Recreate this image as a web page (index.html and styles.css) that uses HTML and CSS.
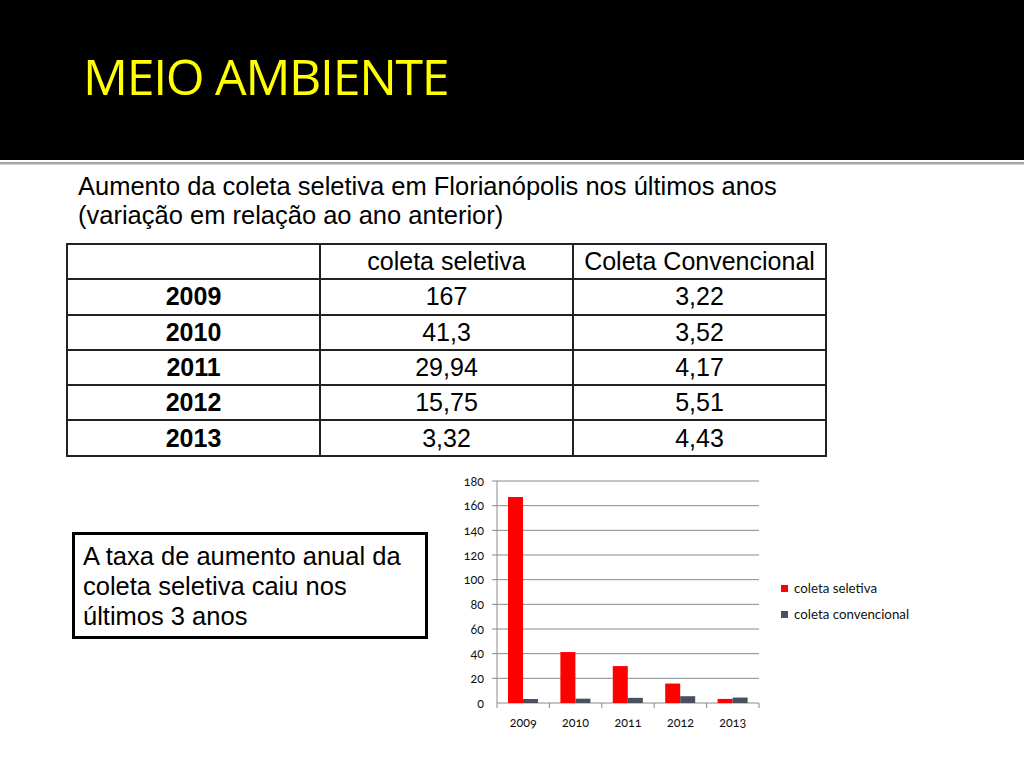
FILE: index.html
```html
<!DOCTYPE html>
<html lang="pt">
<head>
<meta charset="utf-8">
<title>Meio Ambiente</title>
<link rel="stylesheet" href="styles.css">
</head>
<body>
<header class="slide-header">
  <h1 class="title">MEIO AMBIENTE</h1>
</header>
<div class="rule"></div>
<main class="content">
  <p class="subtitle">Aumento da coleta seletiva em Florianópolis nos últimos anos<br>(variação em relação ao ano anterior)</p>
  <table class="data">
    <tr><th></th><th>coleta seletiva</th><th>Coleta Convencional</th></tr>
    <tr><td class="year">2009</td><td>167</td><td>3,22</td></tr>
    <tr><td class="year">2010</td><td>41,3</td><td>3,52</td></tr>
    <tr><td class="year">2011</td><td>29,94</td><td>4,17</td></tr>
    <tr><td class="year">2012</td><td>15,75</td><td>5,51</td></tr>
    <tr><td class="year">2013</td><td>3,32</td><td>4,43</td></tr>
  </table>
  <div class="lower">
    <div class="note">A taxa de aumento anual da coleta seletiva caiu nos últimos 3 anos</div>
    <svg class="chart" width="500" height="270" viewBox="0 0 500 270">
      <g class="grid">
        <line x1="57" y1="11" x2="319" y2="11"/>
        <line x1="57" y1="35.67" x2="319" y2="35.67"/>
        <line x1="57" y1="60.33" x2="319" y2="60.33"/>
        <line x1="57" y1="85" x2="319" y2="85"/>
        <line x1="57" y1="109.67" x2="319" y2="109.67"/>
        <line x1="57" y1="134.33" x2="319" y2="134.33"/>
        <line x1="57" y1="159" x2="319" y2="159"/>
        <line x1="57" y1="183.67" x2="319" y2="183.67"/>
        <line x1="57" y1="208.33" x2="319" y2="208.33"/>
        <line x1="57" y1="233" x2="319" y2="233"/>
        <line x1="57" y1="11" x2="57" y2="238"/>
        <line x1="52" y1="11" x2="57" y2="11"/>
        <line x1="52" y1="35.67" x2="57" y2="35.67"/>
        <line x1="52" y1="60.33" x2="57" y2="60.33"/>
        <line x1="52" y1="85" x2="57" y2="85"/>
        <line x1="52" y1="109.67" x2="57" y2="109.67"/>
        <line x1="52" y1="134.33" x2="57" y2="134.33"/>
        <line x1="52" y1="159" x2="57" y2="159"/>
        <line x1="52" y1="183.67" x2="57" y2="183.67"/>
        <line x1="52" y1="208.33" x2="57" y2="208.33"/>
        <line x1="109.4" y1="233" x2="109.4" y2="238"/>
        <line x1="161.8" y1="233" x2="161.8" y2="238"/>
        <line x1="214.2" y1="233" x2="214.2" y2="238"/>
        <line x1="266.6" y1="233" x2="266.6" y2="238"/>
        <line x1="319" y1="233" x2="319" y2="238"/>
      </g>
      <g class="ylabels">
        <text x="44" y="15.5">180</text>
        <text x="44" y="40.17">160</text>
        <text x="44" y="64.83">140</text>
        <text x="44" y="89.5">120</text>
        <text x="44" y="114.17">100</text>
        <text x="44" y="138.83">80</text>
        <text x="44" y="163.5">60</text>
        <text x="44" y="188.17">40</text>
        <text x="44" y="212.83">20</text>
        <text x="44" y="237.5">0</text>
      </g>
      <g class="red">
        <rect x="68" y="27.03" width="15" height="205.97"/>
        <rect x="120.4" y="182.06" width="15" height="50.94"/>
        <rect x="172.8" y="196.07" width="15" height="36.93"/>
        <rect x="225.2" y="213.57" width="15" height="19.43"/>
        <rect x="277.6" y="228.91" width="15" height="4.09"/>
      </g>
      <g class="dark">
        <rect x="83" y="229.03" width="15" height="3.97"/>
        <rect x="135.4" y="228.66" width="15" height="4.34"/>
        <rect x="187.8" y="227.86" width="15" height="5.14"/>
        <rect x="240.2" y="226.2" width="15" height="6.8"/>
        <rect x="292.6" y="227.54" width="15" height="5.46"/>
      </g>
      <g class="xlabels">
        <text x="83.2" y="256.5">2009</text>
        <text x="135.6" y="256.5">2010</text>
        <text x="188" y="256.5">2011</text>
        <text x="240.4" y="256.5">2012</text>
        <text x="292.8" y="256.5">2013</text>
      </g>
      <g class="legend">
        <rect class="red-fill" x="341" y="115" width="7" height="7"/>
        <text x="354" y="122.5">coleta seletiva</text>
        <rect class="dark-fill" x="341" y="141" width="7" height="7"/>
        <text x="354" y="148.5">coleta convencional</text>
      </g>
    </svg>
  </div>
</main>
</body>
</html>
```

FILE: styles.css
```css
html, body {
  margin: 0;
  padding: 0;
  background: #ffffff;
}
body {
  width: 1024px;
  height: 768px;
  overflow: hidden;
  font-family: "Liberation Sans", Arial, sans-serif;
  color: #000;
}
.slide-header {
  height: 160px;
  background: #000;
  box-sizing: border-box;
  padding: 51px 0 0 83px;
}
.title {
  margin: 0;
  font-family: "Open Sans", "Lato", sans-serif;
  font-weight: 400;
  font-size: 50px;
  line-height: 50px;
  color: #ffff00;
  letter-spacing: -1.3px;
}
.rule {
  height: 3px;
  margin-top: 2px;
  background: linear-gradient(#8f8f8f, #d8d8d8);
}
.content {
  padding: 7px 0 0 66px;
}
.subtitle {
  margin: 0 0 13px 12px;
  font-size: 25.5px;
  line-height: 29px;
}
.data {
  border-collapse: collapse;
  width: 761px;
  table-layout: fixed;
  font-size: 25px;
}
.data th, .data td {
  border: 2px solid #222;
  height: 33.3px;
  padding: 0;
  text-align: center;
  font-weight: 400;
  line-height: 31px;
}
.data td.year {
  font-weight: 700;
}
.lower {
  display: flex;
  align-items: flex-start;
  padding: 13px 0 0 6px;
}
.note {
  margin-top: 62px;
  width: 356px;
  box-sizing: border-box;
  border: 3px solid #000;
  padding: 6px 8px 5px 8px;
  font-size: 25.5px;
  line-height: 30px;
}
.chart {
  margin-left: 12px;
  display: block;
}
.grid line {
  stroke: #8a8a8a;
  stroke-width: 1;
}
.red rect, .red-fill {
  fill: #ff0000;
}
.dark rect, .dark-fill {
  fill: #4a5060;
}
.chart text {
  font-family: "Lato", "Open Sans", sans-serif;
  font-variant-numeric: oldstyle-nums;
  font-size: 12.5px;
  fill: #111;
}
.ylabels text {
  text-anchor: end;
}
.xlabels text {
  text-anchor: middle;
}
.legend text {
  font-size: 13.3px;
}
```
